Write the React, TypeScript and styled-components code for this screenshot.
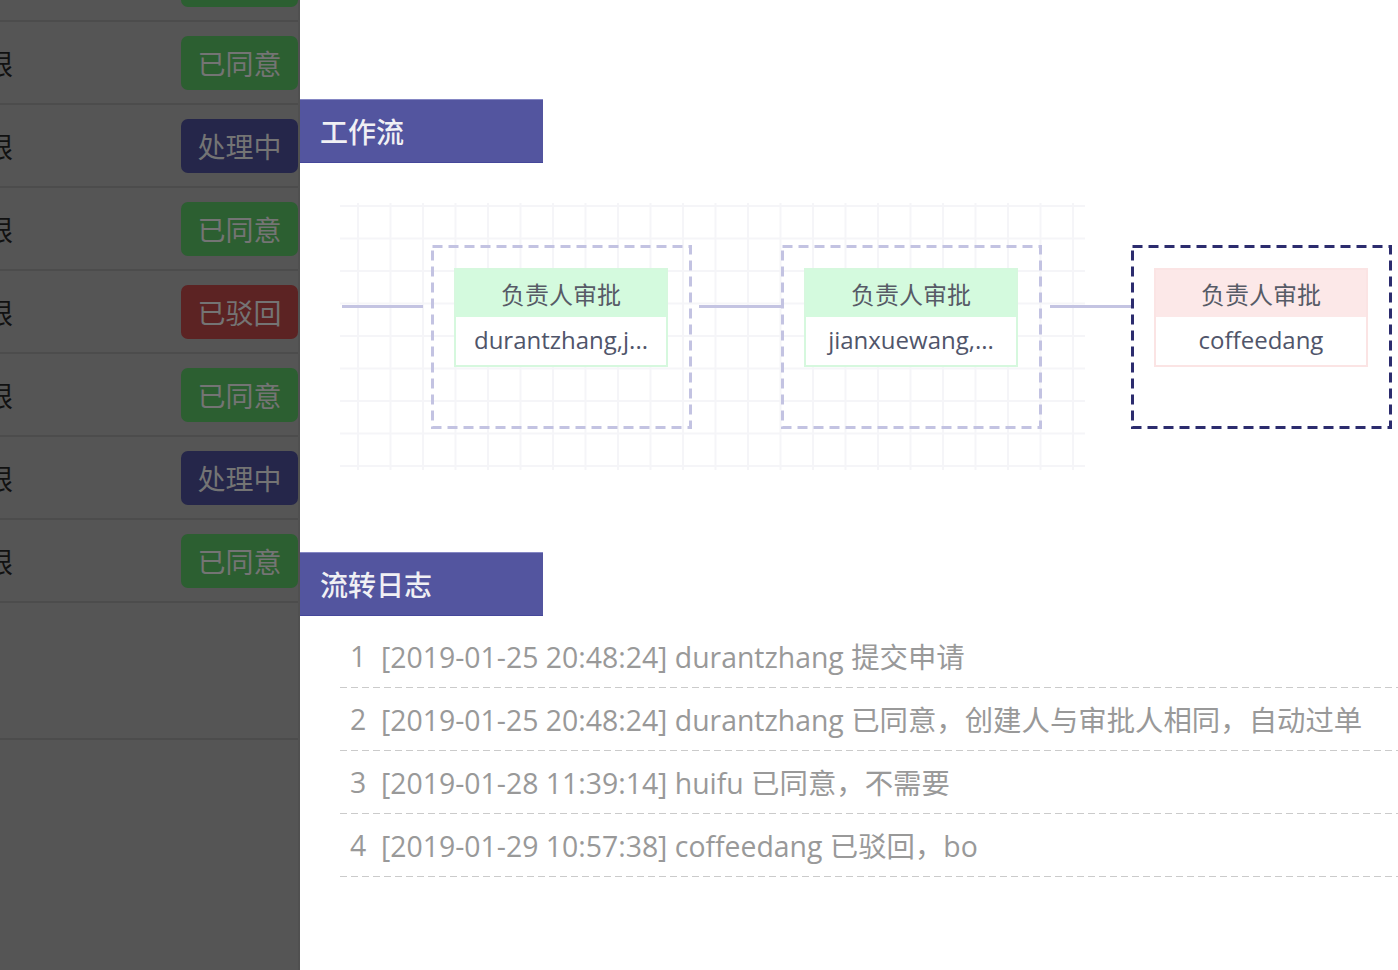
import React from "react";
import styled, { createGlobalStyle } from "styled-components";

const Global = createGlobalStyle`
  html, body { margin: 0; padding: 0; background: #fff; overflow: hidden; }
  body { font-family: "Open Sans", "Noto Sans CJK SC", sans-serif; }
  * { box-sizing: border-box; }
`;

const Page = styled.div`
  display: flex;
  width: 1398px;
  height: 970px;
  overflow: hidden;
`;

const Side = styled.div`
  width: 300px;
  flex: none;
  background: #555555;
  overflow: hidden;
  border-right: 2px solid #505050;
`;

const SideList = styled.div`
  margin-top: -61px;
  display: flex;
  flex-direction: column;
`;

const SideRow = styled.div<{ $h?: number }>`
  height: ${(p) => p.$h ?? 83}px;
  border-bottom: 2px solid #4c4c4c;
  display: flex;
  align-items: center;
  justify-content: space-between;
`;

const SideText = styled.span`
  margin-left: -15px;
  font-size: 28px;
  color: #111;
  font-family: "Noto Sans CJK SC", sans-serif;
`;

const badgeColors: Record<string, string> = {
  ok: "#2c5f31",
  doing: "#25264a",
  back: "#5c2323",
};

const Badge = styled.div<{ $kind: string }>`
  width: 117px;
  height: 54px;
  border-radius: 7px;
  background: ${(p) => badgeColors[p.$kind]};
  color: #747474;
  font-size: 28px;
  font-family: "Noto Sans CJK SC", sans-serif;
  display: flex;
  align-items: center;
  justify-content: center;
`;

const Main = styled.div`
  flex: 1;
  background: #fff;
  padding-top: 99px;
  display: flex;
  flex-direction: column;
`;

const SectionBar = styled.div<{ $mt?: number }>`
  width: 243px;
  height: 64px;
  margin-top: ${(p) => p.$mt ?? 0}px;
  background: #53559f;
  border-top: 1px solid #8587c4;
  border-bottom: 1px solid #45479a;
  color: #f0f0f4;
  font-size: 28px;
  font-weight: 500;
  font-family: "Noto Sans CJK SC", sans-serif;
  display: flex;
  align-items: center;
  padding-left: 20px;
`;

const Canvas = styled.div`
  position: relative;
  margin: 40px 0 0 40px;
  width: 745px;
  height: 267px;
  background-image: linear-gradient(to right, #f5f5f8 2px, transparent 2px),
    linear-gradient(to bottom, #f5f5f8 2px, transparent 2px);
  background-size: 32.5px 32.5px;
  background-position: 17px 2px;
`;

const Edge = styled.div<{ $x: number; $w: number }>`
  position: absolute;
  top: 102px;
  left: ${(p) => p.$x}px;
  width: ${(p) => p.$w}px;
  height: 3px;
  background: #c4c4e2;
`;

const NodeBox = styled.div<{ $x: number }>`
  position: absolute;
  top: 42px;
  left: ${(p) => p.$x}px;
  width: 261px;
  height: 184px;
  padding: 23px;
`;

const NodeFrame = styled.svg`
  position: absolute;
  inset: 0;
  width: 100%;
  height: 100%;
  overflow: visible;
  pointer-events: none;
`;

const Card = styled.div<{ $tone: "green" | "pink" }>`
  position: relative;
  width: 214px;
  border: 2px solid ${(p) => (p.$tone === "green" ? "#d6f8de" : "#fbe4e4")};
  display: flex;
  flex-direction: column;
  background: #fff;
`;

const CardHead = styled.div<{ $tone: "green" | "pink" }>`
  height: 47px;
  padding-bottom: 1px;
  background: ${(p) => (p.$tone === "green" ? "#d4fade" : "#fce8e8")};
  color: #575b66;
  font-size: 24px;
  font-family: "Noto Sans CJK SC", sans-serif;
  display: flex;
  align-items: center;
  justify-content: center;
`;

const CardBody = styled.div`
  height: 48px;
  padding-bottom: 4px;
  color: #50556a;
  font-size: 24px;
  display: flex;
  align-items: center;
  justify-content: center;
  white-space: nowrap;
`;

const LogList = styled.div`
  margin: 9px 0 0 40px;
  display: flex;
  flex-direction: column;
`;

const LogRow = styled.div`
  height: 63px;
  padding: 0 0 2px 10px;
  display: flex;
  align-items: center;
  font-size: 28.4px;
  color: #999;
  white-space: nowrap;
  background-image: repeating-linear-gradient(
    to right,
    #cbcbcb 0 7px,
    transparent 7px 11px
  );
  background-size: 100% 1.5px;
  background-repeat: no-repeat;
  background-position: left bottom;
`;

const LogNum = styled.span`
  width: 31px;
  flex: none;
`;

const statuses = [
  { k: "ok", t: "已同意" },
  { k: "ok", t: "已同意" },
  { k: "doing", t: "处理中" },
  { k: "ok", t: "已同意" },
  { k: "back", t: "已驳回" },
  { k: "ok", t: "已同意" },
  { k: "doing", t: "处理中" },
  { k: "ok", t: "已同意" },
];

const nodes = [
  { x: 91, name: "durantzhang,j...", tone: "green" as const, active: false },
  { x: 441, name: "jianxuewang,...", tone: "green" as const, active: false },
  { x: 791, name: "coffeedang", tone: "pink" as const, active: true },
];

const logs = [
  "[2019-01-25 20:48:24] durantzhang 提交申请",
  "[2019-01-25 20:48:24] durantzhang 已同意，创建人与审批人相同，自动过单",
  "[2019-01-28 11:39:14] huifu 已同意，不需要",
  "[2019-01-29 10:57:38] coffeedang 已驳回，bo",
];

export default function App() {
  return (
    <>
      <Global />
      <Page>
        <Side>
          <SideList>
            {statuses.map((s, i) => (
              <SideRow key={i}>
                <SideText>限</SideText>
                <Badge $kind={s.k}>{s.t}</Badge>
              </SideRow>
            ))}
            <SideRow $h={137} />
          </SideList>
        </Side>
        <Main>
          <SectionBar>工作流</SectionBar>
          <Canvas>
            <Edge $x={2} $w={81} />
            <Edge $x={359} $w={82} />
            <Edge $x={710} $w={81} />
            {nodes.map((n, i) => (
              <NodeBox key={i} $x={n.x}>
                <NodeFrame viewBox="0 0 261 184" preserveAspectRatio="none">
                  <rect
                    x="1.5"
                    y="1.5"
                    width="258"
                    height="181"
                    fill="none"
                    stroke={n.active ? "#2c2c6e" : "#c3c3e2"}
                    strokeWidth="3"
                    strokeDasharray="10 6"
                  />
                </NodeFrame>
                <Card $tone={n.tone}>
                  <CardHead $tone={n.tone}>负责人审批</CardHead>
                  <CardBody>{n.name}</CardBody>
                </Card>
              </NodeBox>
            ))}
          </Canvas>
          <SectionBar $mt={82}>流转日志</SectionBar>
          <LogList>
            {logs.map((l, i) => (
              <LogRow key={i}>
                <LogNum>{i + 1}</LogNum>
                {l}
              </LogRow>
            ))}
          </LogList>
        </Main>
      </Page>
    </>
  );
}
